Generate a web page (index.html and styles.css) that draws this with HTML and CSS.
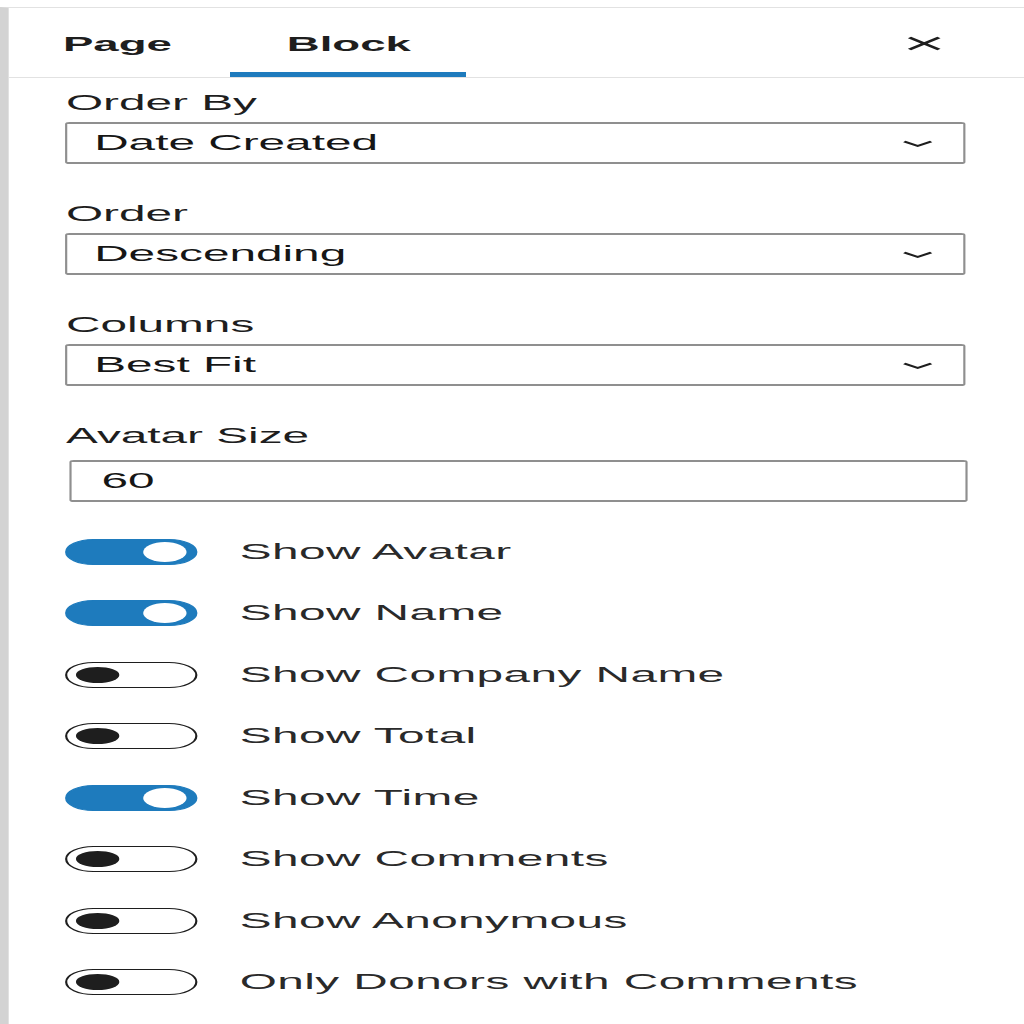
FILE: index.html
```html
<!DOCTYPE html>
<html lang="en">
<head>
  <meta charset="UTF-8">
  <meta name="viewport" content="width=device-width, initial-scale=1.0">
  <title>Block settings</title>
  <link rel="stylesheet" href="styles.css">
</head>
<body>
  <div class="sidebar">
    <div class="tabs">
      <div class="tab">Page</div>
      <div class="tab is-active">Block</div>
      <div class="close">
        <svg width="16" height="15" viewBox="0 0 16 15"><path d="M1.2 1.5 L14.8 13.5 M14.8 1.5 L1.2 13.5" stroke="#1e1e1e" stroke-width="2.2" fill="none"/></svg>
      </div>
    </div>

    <div class="content">
      <div class="field">
        <div class="label">Order By</div>
        <div class="select">
          <span>Date Created</span>
          <svg class="chev" width="14" height="8" viewBox="0 0 14 8"><path d="M0.8 1.5 L7 6 L13.2 1.5" stroke="#1e1e1e" stroke-width="1.8" fill="none"/></svg>
        </div>
      </div>
      <div class="field">
        <div class="label">Order</div>
        <div class="select">
          <span>Descending</span>
          <svg class="chev" width="14" height="8" viewBox="0 0 14 8"><path d="M0.8 1.5 L7 6 L13.2 1.5" stroke="#1e1e1e" stroke-width="1.8" fill="none"/></svg>
        </div>
      </div>
      <div class="field">
        <div class="label">Columns</div>
        <div class="select">
          <span>Best Fit</span>
          <svg class="chev" width="14" height="8" viewBox="0 0 14 8"><path d="M0.8 1.5 L7 6 L13.2 1.5" stroke="#1e1e1e" stroke-width="1.8" fill="none"/></svg>
        </div>
      </div>
      <div class="field field_input">
        <div class="label">Avatar Size</div>
        <div class="input">60</div>
      </div>

      <div class="toggles">
        <div class="toggle_row"><span class="toggle on"><i></i></span><span class="toggle_label">Show Avatar</span></div>
        <div class="toggle_row"><span class="toggle on"><i></i></span><span class="toggle_label">Show Name</span></div>
        <div class="toggle_row"><span class="toggle"><i></i></span><span class="toggle_label">Show Company Name</span></div>
        <div class="toggle_row"><span class="toggle"><i></i></span><span class="toggle_label">Show Total</span></div>
        <div class="toggle_row"><span class="toggle on"><i></i></span><span class="toggle_label">Show Time</span></div>
        <div class="toggle_row"><span class="toggle"><i></i></span><span class="toggle_label">Show Comments</span></div>
        <div class="toggle_row"><span class="toggle"><i></i></span><span class="toggle_label">Show Anonymous</span></div>
        <div class="toggle_row"><span class="toggle"><i></i></span><span class="toggle_label">Only Donors with Comments</span></div>
      </div>
    </div>
  </div>
</body>
</html>
```

FILE: styles.css
```css
* {margin: 0; padding: 0; box-sizing: border-box;}
html, body {background: #fff; overflow: hidden;}
body {font-family: "Liberation Sans", Arial, sans-serif; color: #1e1e1e;}

/* the screenshot is stretched sideways, so the panel is laid out narrow and widened */
.sidebar {width: 472px; min-height: 1017px; margin-top: 7px; border-top: 1px solid #e2e2e2; border-left: 4px solid #d3d3d3; transform: scaleX(2.1695); transform-origin: 0 0;}

.tabs {display: flex; height: 70px; border-bottom: 1px solid #e2e2e2;}
.tab {display: flex; align-items: center; padding: 2px 26px 0; font-size: 21px; font-weight: 700; color: #1e1e1e;}
.tab:first-child {padding-left: 25px; padding-right: 27px;}
.tab.is-active {box-shadow: inset 0 -5px 0 #1e7bbd;}
.close {display: flex; align-items: center; margin-left: auto; padding: 2px 38.5px 0 0;}

.content {padding: 12px 27px 0 26.4px;}
.field {margin-bottom: 37px;}
.label {font-size: 22px; line-height: 26px; margin-bottom: 6px;}
.select {display: flex; align-items: center; justify-content: space-between; height: 42px; padding: 0 14.5px 0 12px; border: 1px solid #8f8f8f; border-width: 2px 1.2px; border-radius: 2px; font-size: 22px; color: #161616;}
.chev {margin-top: 1px;}

.field_input {margin-bottom: 0;}
.field_input .label {margin-bottom: 11px;}
.input {display: flex; align-items: center; height: 42px; margin-left: 1.4px; margin-right: -1.4px; padding-left: 14px; border: 1px solid #8f8f8f; border-width: 2px 1.2px; border-radius: 2px; font-size: 22px; color: #161616;}

.toggles {margin-top: 19.3px;}
.toggle_row {display: flex; align-items: center; height: 61.43px;}
.toggle {display: flex; align-items: center; flex: none; width: 60.5px; height: 26px; border-radius: 13px; border: 1.6px solid #1e1e1e; background: #fff;}
.toggle i {display: block; width: 20px; height: 16px; margin-left: 4px; border-radius: 50%; background: #1e1e1e;}
.toggle.on {border-color: #1e7bbd; background: #1e7bbd;}
.toggle.on i {width: 20px; height: 20px; margin-left: auto; margin-right: 4px; background: #fff;}
.toggle_label {margin-left: 19.6px; font-size: 22px; letter-spacing: 0.2px; color: #2a2a2a;}
```
